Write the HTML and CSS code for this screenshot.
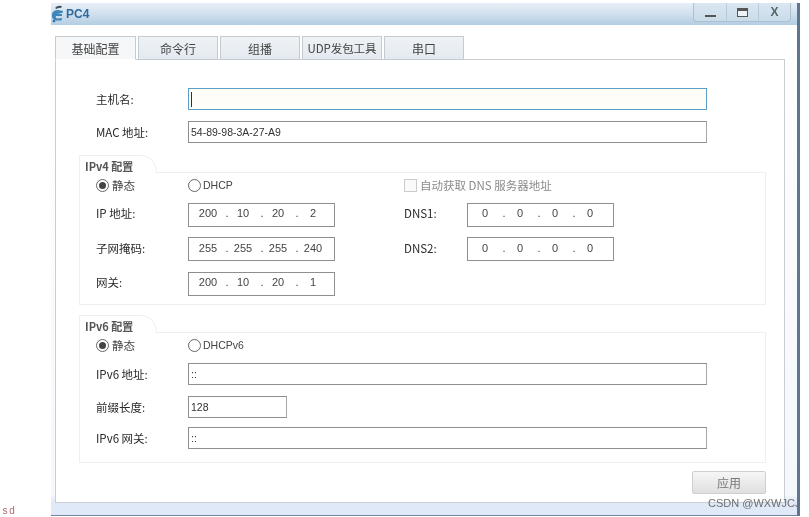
FILE: index.html
```html
<!DOCTYPE html>
<html lang="zh">
<head>
<meta charset="utf-8">
<title>PC4</title>
<link rel="stylesheet" href="styles.css">
</head>
<body>
<div class="page">
  <div class="gutter"><span class="sd">sd</span></div>
  <div class="window">
    <header class="titlebar">
      <svg class="logo" width="13" height="18" viewBox="0 0 13 18">
        <path d="M4 3 Q6 0 11 1 L10 3 Q7 2.500 5.500 4 Z" fill="#4a5560"/>
        <path d="M1 9 Q2 5 7 5 L12 6 L11.500 8 L6 8 L11 9 L11 11 L5 11 Q4 13 7 13.500 L11 13 L10.500 15.500 L5 15.500 Q0 14 1 9 Z" fill="#3f86b8"/>
        <circle cx="3" cy="16" r="1.300" fill="#2f6d9c"/>
      </svg>
      <span class="title">PC4</span>
      <div class="controls">
        <span class="ctl"><i class="ico-min"></i></span>
        <span class="ctl"><i class="ico-max"></i></span>
        <span class="ctl ctl-x">X</span>
      </div>
    </header>
    <div class="body">
      <nav class="tabs">
        <span class="tab tab-active">基础配置</span>
        <span class="tab">命令行</span>
        <span class="tab">组播</span>
        <span class="tab tab-udp">UDP发包工具</span>
        <span class="tab">串口</span>
      </nav>
      <main class="panel">
        <div class="row row-host">
          <label class="lab">主机名:</label>
          <div class="input long focus"><i class="caret"></i></div>
        </div>
        <div class="row row-mac">
          <label class="lab">MAC 地址:</label>
          <div class="input long">54-89-98-3A-27-A9</div>
        </div>

        <section class="group group-v4">
          <div class="legend">IPv4 配置</div>
          <div class="box grid4">
            <div class="radio-line"><span class="radio on"></span><span class="cjk">静态</span></div>
            <div class="radio-line"><span class="radio"></span><span>DHCP</span></div>
            <div class="check-line"><span class="check"></span><span>自动获取 DNS 服务器地址</span></div>

            <label class="lab">IP 地址:</label>
            <div class="ip"><span>200</span><b>.</b><span>10</span><b>.</b><span>20</span><b>.</b><span>2</span></div>
            <span></span>
            <label class="lab">DNS1:</label>
            <div class="ip ip-dns"><span>0</span><b>.</b><span>0</span><b>.</b><span>0</span><b>.</b><span>0</span></div>

            <label class="lab">子网掩码:</label>
            <div class="ip"><span>255</span><b>.</b><span>255</span><b>.</b><span>255</span><b>.</b><span>240</span></div>
            <span></span>
            <label class="lab">DNS2:</label>
            <div class="ip ip-dns"><span>0</span><b>.</b><span>0</span><b>.</b><span>0</span><b>.</b><span>0</span></div>

            <label class="lab">网关:</label>
            <div class="ip"><span>200</span><b>.</b><span>10</span><b>.</b><span>20</span><b>.</b><span>1</span></div>
          </div>
        </section>

        <section class="group group-v6">
          <div class="legend">IPv6 配置</div>
          <div class="box v6">
            <div class="v6-radios">
              <div class="radio-line"><span class="radio on"></span><span class="cjk">静态</span></div>
              <div class="radio-line"><span class="radio"></span><span>DHCPv6</span></div>
            </div>
            <div class="row v6-addr">
              <label class="lab">IPv6 地址:</label>
              <div class="input long">::</div>
            </div>
            <div class="row v6-prefix">
              <label class="lab">前缀长度:</label>
              <div class="input short">128</div>
            </div>
            <div class="row v6-gw">
              <label class="lab">IPv6 网关:</label>
              <div class="input long">::</div>
            </div>
          </div>
        </section>

        <div class="actions"><button class="apply" type="button">应用</button></div>
      </main>
    </div>
    <span class="mark">CSDN @WXWJCJ</span>
  </div>
</div>
</body>
</html>
```

FILE: styles.css
```css
* { box-sizing: border-box; }
html, body { margin: 0; padding: 0; background: #fff; }
body {
  font-family: "Liberation Sans", "Noto Sans CJK SC", sans-serif;
  font-size: 11px;
  color: #2a2a2a;
}
.page {
  width: 809px;
  height: 517px;
  display: flex;
  overflow: hidden;
  filter: blur(0.45px);
}
.gutter {
  width: 51px;
  flex: none;
  display: flex;
  align-items: flex-end;
  padding: 0 0 0 2px;
}
.sd {
  font-family: "Liberation Mono", monospace;
  font-size: 10px;
  letter-spacing: 1px;
  color: #b06a6a;
  line-height: 12px;
  margin-bottom: -1px;
}
.window {
  width: 749px;
  height: 513px;
  margin-top: 3px;
  flex: none;
  display: flex;
  flex-direction: column;
  position: relative;
  border-right: 3px solid #5f7590;
}

/* title bar */
.titlebar {
  height: 22px;
  flex: none;
  display: flex;
  align-items: center;
  background: linear-gradient(#e6eff7, #d3e2ef 45%, #b3cde3);
}
.logo { margin: 0 2px 0 0; flex: none; }
.title {
  font-size: 12px;
  font-weight: bold;
  color: #2f6b9c;
  margin-left: 0;
}
.controls {
  margin-left: auto;
  margin-right: 6px;
  align-self: flex-start;
  height: 19px;
  display: flex;
  border: 1px solid #adc0d0;
  border-top: 0;
  border-radius: 0 0 4px 4px;
  background: linear-gradient(#dbe7f1, #c9dbe9);
}
.ctl {
  width: 32px;
  display: flex;
  align-items: center;
  justify-content: center;
  border-left: 1px solid #b9cad8;
  position: relative;
}
.ctl:first-child { border-left: 0; }
.ico-min { width: 11px; height: 2px; margin-top: 8px; background: #555; }
.ico-max { width: 11px; height: 9px; border: 1px solid #555; border-top-width: 3px; background: #eef3f7; }
.ctl-x { font-size: 12px; font-weight: bold; color: #566; }

/* body */
.body {
  flex: 1;
  min-height: 0;
  padding: 11px 0 0 4px;
  display: flex;
  flex-direction: column;
  background: linear-gradient(#ffffff, #f4f7fc 96%, #dfe9f7 97.5%);
  border-bottom: 1px solid #74869b;
}
.tabs {
  height: 24px;
  flex: none;
  display: flex;
  gap: 2px;
  margin-bottom: -1px;
  position: relative;
}
.tab {
  width: 80px;
  display: flex;
  align-items: center;
  justify-content: center;
  font-family: "Noto Sans CJK SC", sans-serif;
  font-size: 12px;
  color: #444;
  background: linear-gradient(#eef2f5, #e3eaf0);
  border: 1px solid #c4cbd1;
}
.tab-active { width: 81px; background: #f6f7f8; border-bottom-color: #fff; }
.tab-udp { font-size: 11.5px; letter-spacing: -0.1px; }

.panel {
  width: 730px;
  height: 444px;
  flex: none;
  padding: 0 18px 0 23px;
  display: flex;
  flex-direction: column;
  background: #fff;
  border: 1px solid #c9ced4;
}

.row { display: flex; align-items: center; padding-left: 17px; }
.row-host { margin-top: 28px; }
.row-mac { margin-top: 11px; }
.lab {
  width: 92px;
  flex: none;
  font-family: "Noto Sans CJK SC", sans-serif;
  font-size: 11.5px;
  color: #2a2a2a;
}
.input {
  height: 22px;
  flex: none;
  display: flex;
  align-items: center;
  padding-left: 2px;
  background: #fff;
  border: 1px solid #8f8f8f;
  border-right-color: #a6a6a6;
  font-size: 10.5px;
  color: #333;
}
.long { width: 519px; }
.short { width: 99px; }
.focus { border-color: #5b9fc7; background: #fffdf8; }
.caret { width: 1px; height: 15px; background: #333; }

/* groups */
.group { display: flex; flex-direction: column; }
.group-v4 { margin-top: 12px; }
.group-v6 { margin-top: 10px; }
.legend {
  width: 78px;
  height: 18px;
  margin-bottom: -1px;
  padding: 3px 0 0 5px;
  font-family: "Noto Sans CJK SC", sans-serif;
  font-size: 11px;
  line-height: 14px;
  font-weight: bold;
  color: #555;
  background: #fff;
  border: 1px solid #eeeff0;
  border-bottom: 0;
  border-top-right-radius: 16px 17px;
  position: relative;
}
.box { border: 1px solid #eeeff0; padding-left: 16px; }
.group-v4 .box { height: 133px; }
.group-v6 .box { height: 131px; }

.grid4 {
  display: grid;
  grid-template-columns: 92px 147px 69px 63px 147px;
  grid-auto-rows: 24px;
  grid-template-rows: 14px;
  row-gap: 10.5px;
  align-items: center;
  padding-top: 5px;
}
.grid4 .lab { padding-bottom: 3px; }
.radio-line, .check-line { display: flex; align-items: center; height: 14px; }
.radio-line { font-size: 10.5px; color: #444; }
.radio {
  width: 13px;
  height: 13px;
  flex: none;
  border-radius: 50%;
  border: 1px solid #666;
  background: #fff;
  margin-right: 2px;
  position: relative;
}
.radio.on::after {
  content: "";
  position: absolute;
  left: 2px;
  top: 2px;
  width: 7px;
  height: 7px;
  border-radius: 50%;
  background: #444;
}
.cjk { font-family: "Noto Sans CJK SC", sans-serif; font-size: 11.5px; margin-left: 1px; }
.check-line {
  grid-column: 3 / 6;
  font-family: "Noto Sans CJK SC", sans-serif;
  font-size: 11.5px;
  color: #8a8a8a;
  margin-left: 69px;
}
.check {
  width: 13px;
  height: 13px;
  flex: none;
  border: 1px solid #ccc;
  background: #fafafa;
  margin-right: 3px;
}
.ip {
  height: 24px;
  display: flex;
  align-items: center;
  padding: 0 0 3px 7px;
  background: #fff;
  border: 1px solid #8f8f8f;
  font-size: 11px;
  color: #444;
}
.ip-dns { padding-left: 5px; }
.ip span { width: 24px; text-align: center; flex: none; }
.ip b { width: 11px; text-align: center; font-weight: normal; flex: none; padding-left: 3px; }

.v6 { padding-left: 0; padding-top: 5px; }
.v6-radios { display: flex; padding-left: 16px; }
.v6-radios .radio-line:first-child { width: 92px; }
.v6 .row { padding-left: 16px; }
.v6-addr { margin-top: 11px; }
.v6-prefix { margin-top: 11px; }
.v6-gw { margin-top: 9px; }

.actions { display: flex; justify-content: flex-end; margin-top: 8px; }
.apply {
  width: 74px;
  height: 23px;
  padding: 0;
  font-family: "Noto Sans CJK SC", sans-serif;
  font-size: 12px;
  color: #777;
  background: linear-gradient(#f6f6f6, #dfdfdf);
  border: 1px solid #cfcfcf;
  border-radius: 2px;
}
.mark {
  position: absolute;
  left: 657px;
  bottom: 6px;
  font-size: 11px;
  line-height: 13px;
  color: #6f6f6f;
  white-space: nowrap;
}
```
